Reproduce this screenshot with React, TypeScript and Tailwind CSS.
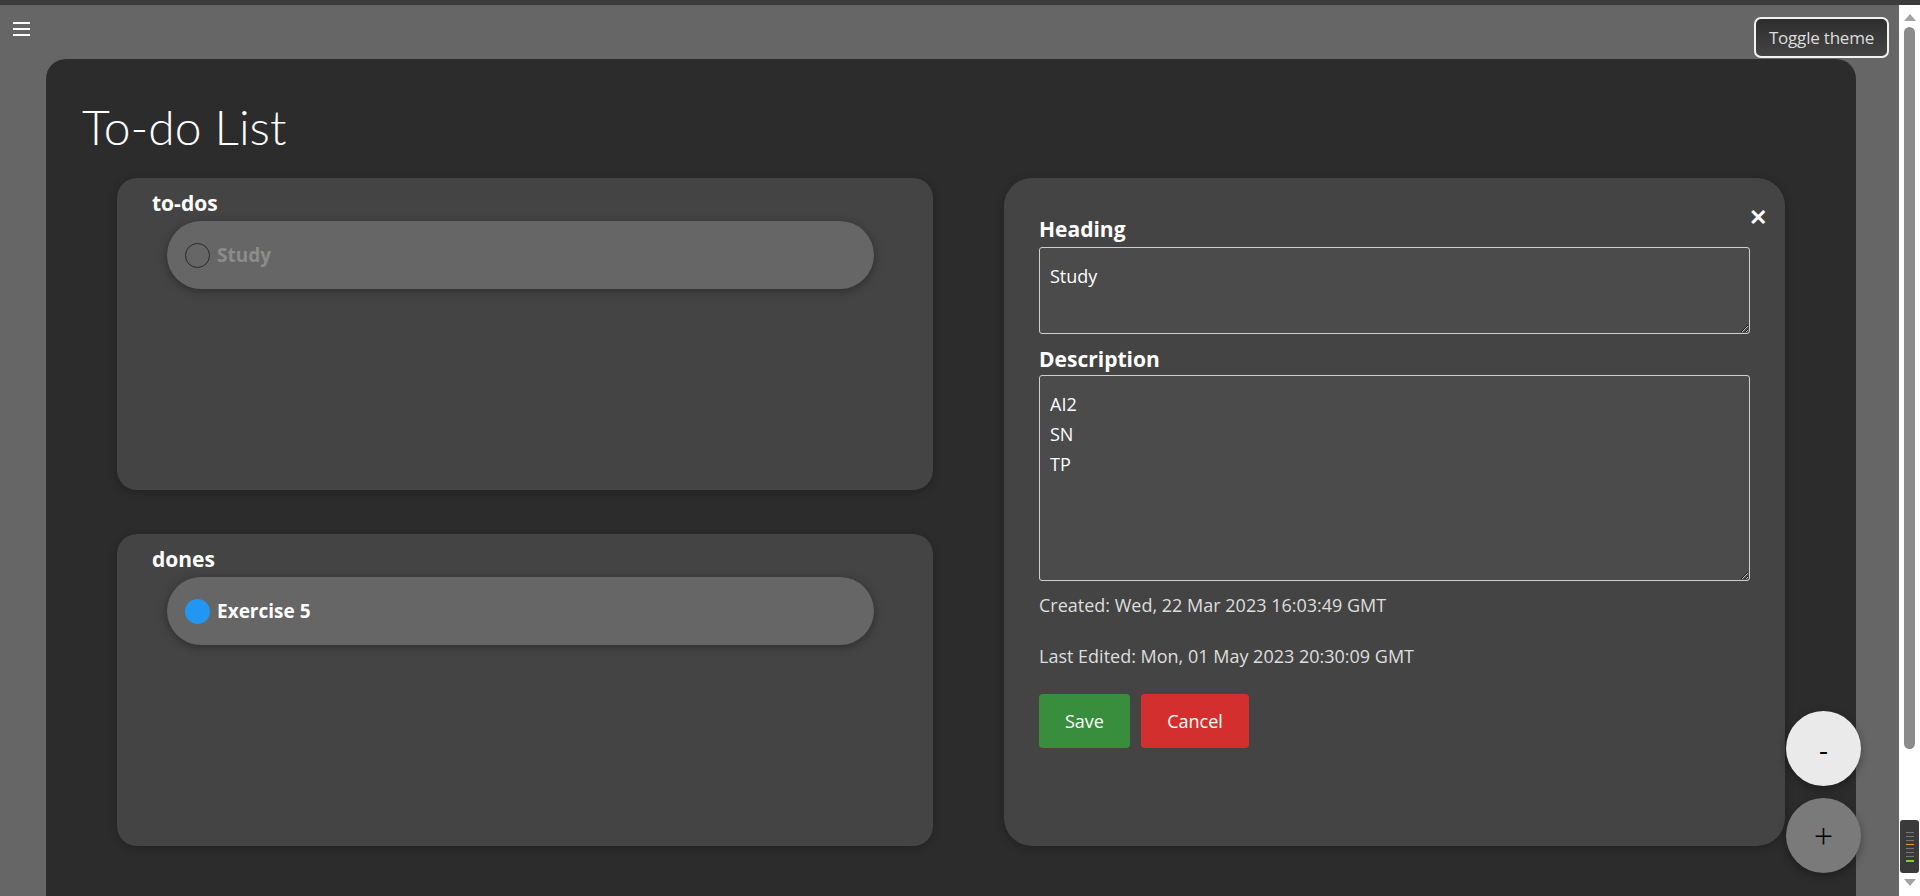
import { useState } from "react";

type Todo = { id: number; title: string; done: boolean };

const todoList: Todo[] = [
  { id: 1, title: "Study", done: false },
  { id: 2, title: "Exercise 5", done: true },
];

function TodoPill({ todo }: { todo: Todo }) {
  return (
    <div className="ml-[50px] flex h-[68px] w-[707px] items-center rounded-full bg-[#666666] pl-[18px] shadow-[0_2px_10px_rgba(0,0,0,0.35)]">
      {todo.done ? (
        <span className="h-[25px] w-[25px] rounded-full bg-[#2196f3]" />
      ) : (
        <span className="h-[25px] w-[25px] rounded-full border border-[#2a2a2a]" />
      )}
      <span
        className={
          todo.done
            ? "ml-[7px] text-[19px] font-bold text-white"
            : "ml-[7px] text-[19px] font-bold text-[#8c8c8c]"
        }
      >
        {todo.title}
      </span>
    </div>
  );
}

function ListPanel({ name, items }: { name: string; items: Todo[] }) {
  return (
    <section className="h-[312px] rounded-[20px] bg-[#444444] pt-[11px] shadow-[0_2px_8px_rgba(0,0,0,0.25)]">
      <h2 className="mb-[4px] pl-[35px] text-[21px] font-bold leading-[28px] text-white">{name}</h2>
      <div className="flex flex-col gap-3">
        {items.map((t) => (
          <TodoPill todo={t} key={t.id} />
        ))}
      </div>
    </section>
  );
}

function Scrollbar() {
  return (
    <div className="flex w-[21px] flex-col items-center bg-white">
      <div className="mt-[9px] h-0 w-0 border-x-[6px] border-b-[7px] border-x-transparent border-b-[#a3a3a3]" />
      <div className="mt-[6px] h-[722px] w-[11px] rounded-full bg-[#8b8b8b]" />
      <div className="mt-[71px] flex h-[53px] w-[19px] flex-col items-center justify-center gap-[3px] rounded-[3px] bg-[#3a3a3a]">
        <div className="h-[1px] w-[8px] bg-[#777]" />
        <div className="h-[1px] w-[8px] bg-[#777]" />
        <div className="h-[1px] w-[8px] bg-[#777]" />
        <div className="h-[1px] w-[8px] bg-[#e89b2a]" />
        <div className="h-[1px] w-[8px] bg-[#777]" />
        <div className="h-[1px] w-[8px] bg-[#777]" />
        <div className="h-[1px] w-[8px] bg-[#777]" />
        <div className="h-[2px] w-[8px] bg-[#7ed321]" />
      </div>
      <div className="mt-[6px] h-0 w-0 border-x-[6px] border-t-[7px] border-x-transparent border-t-[#a3a3a3]" />
    </div>
  );
}

function App() {
  const [heading, setHeading] = useState("Study");
  const [description, setDescription] = useState("AI2\nSN\nTP");

  const todos = todoList.filter((t) => !t.done);
  const dones = todoList.filter((t) => t.done);

  return (
    <div
      className="flex h-[896px] flex-col overflow-hidden bg-[#666666]"
      style={{ fontFamily: "'Open Sans', Lato, sans-serif" }}
    >
      <div className="h-[5px] shrink-0 bg-[#3b3b3b]" />
      <div className="flex min-h-0 flex-1">
        <div className="relative flex-1">
          {/* top bar */}
          <div className="flex h-[54px] items-start justify-between">
            <button className="ml-[13px] mt-[16px] flex h-[16px] w-[17px] flex-col justify-between py-[1px]">
              <span className="h-[2px] w-full bg-white" />
              <span className="h-[2px] w-full bg-white" />
              <span className="h-[2px] w-full bg-white" />
            </button>
            <button className="mr-[10px] mt-[12px] h-[41px] w-[135px] rounded-[7px] border-2 border-[#f2f2f2] bg-gradient-to-b from-[#2e2e2e] to-[#444444] text-[17px] tracking-[-0.2px] text-[#dddddd]">
              Toggle theme
            </button>
          </div>

          {/* main card */}
          <main className="ml-[46px] mr-[43px] h-[900px] rounded-[20px] bg-[#2c2c2c] pt-[39px]">
            <h1
              className="pl-[36px] text-[48px] font-light leading-[58px] text-white"
              style={{ fontFamily: "Lato, 'Open Sans', sans-serif" }}
            >
              To-do List
            </h1>
            <div className="mt-[22px] flex gap-[71px] px-[71px]">
              <div className="flex w-[816px] flex-col gap-[44px]">
                <ListPanel name="to-dos" items={todos} />
                <ListPanel name="dones" items={dones} />
              </div>

              <section className="relative h-[668px] flex-1 rounded-[28px] bg-[#444444] px-[35px] pt-[37px] shadow-[0_2px_8px_rgba(0,0,0,0.25)]">
                <button className="absolute right-[18px] top-[27px] text-[22px] font-bold leading-none text-white">
                  ✕
                </button>
                <label className="block text-[21px] font-bold leading-[28px] text-white">Heading</label>
                <textarea
                  value={heading}
                  onChange={(e) => setHeading(e.target.value)}
                  className="mt-[4px] block h-[87px] w-full rounded-[3px] border border-[#cfcfcf] bg-[#4b4b4b] px-[10px] py-[13px] text-[18px] leading-[30px] text-white outline-none"
                />
                <label className="mt-[11px] block text-[21px] font-bold leading-[28px] text-white">Description</label>
                <textarea
                  value={description}
                  onChange={(e) => setDescription(e.target.value)}
                  className="mt-[2px] block h-[206px] w-full rounded-[3px] border border-[#cfcfcf] bg-[#4b4b4b] px-[10px] py-[13px] text-[18px] leading-[30px] text-white outline-none"
                />
                <p className="mt-[12px] text-[18px] font-normal leading-[24px] text-[#dedede]">
                  Created: Wed, 22 Mar 2023 16:03:49 GMT
                </p>
                <p className="mt-[27px] text-[18px] font-normal leading-[24px] text-[#dedede]">
                  Last Edited: Mon, 01 May 2023 20:30:09 GMT
                </p>
                <div className="mt-[26px] flex gap-[11px]">
                  <button className="h-[54px] w-[91px] rounded-[4px] bg-[#388e3c] text-[18px] text-white">
                    Save
                  </button>
                  <button className="h-[54px] w-[108px] rounded-[4px] bg-[#d32f2f] text-[18px] text-white">
                    Cancel
                  </button>
                </div>
              </section>
            </div>
          </main>

          {/* floating zoom buttons */}
          <div className="absolute right-[38px] top-[706px] flex flex-col gap-[12px]">
            <button className="h-[75px] w-[75px] rounded-full bg-[#eaeaea] text-[28px] leading-none text-black shadow-[0_3px_8px_rgba(0,0,0,0.35)]">
              -
            </button>
            <button className="h-[75px] w-[75px] rounded-full bg-[#7a7a7a] text-[34px] font-light leading-none text-black shadow-[0_3px_8px_rgba(0,0,0,0.35)]">
              +
            </button>
          </div>
        </div>
        <Scrollbar />
      </div>
    </div>
  );
}

export default App;
